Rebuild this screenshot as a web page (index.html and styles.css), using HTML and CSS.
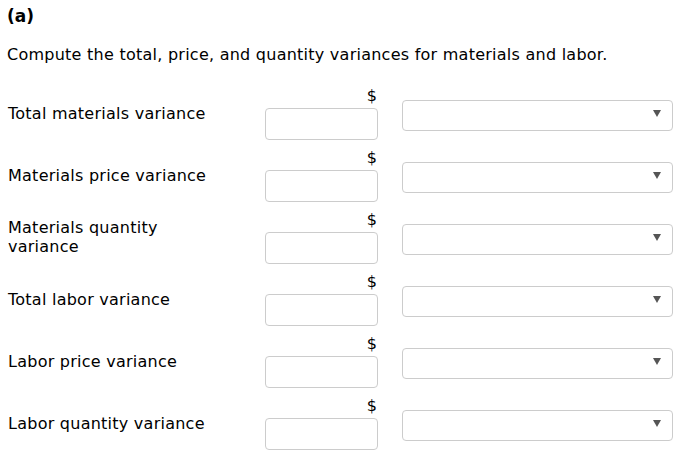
FILE: index.html
```html
<!DOCTYPE html>
<html>
<head>
<meta charset="utf-8">
<link rel="stylesheet" href="styles.css">
</head>
<body>
<div class="page">
  <h3 class="part">(a)</h3>
  <p class="prompt">Compute the total, price, and quantity variances for materials and labor.</p>
  <div class="rows">
    <div class="row">
      <div class="label">Total materials variance</div>
      <div class="amount"><span class="cur">$</span><input class="field" type="text"></div>
      <div class="choice"><div class="select"><span class="arrow"></span></div></div>
    </div>
    <div class="row">
      <div class="label">Materials price variance</div>
      <div class="amount"><span class="cur">$</span><input class="field" type="text"></div>
      <div class="choice"><div class="select"><span class="arrow"></span></div></div>
    </div>
    <div class="row">
      <div class="label">Materials quantity variance</div>
      <div class="amount"><span class="cur">$</span><input class="field" type="text"></div>
      <div class="choice"><div class="select"><span class="arrow"></span></div></div>
    </div>
    <div class="row">
      <div class="label">Total labor variance</div>
      <div class="amount"><span class="cur">$</span><input class="field" type="text"></div>
      <div class="choice"><div class="select"><span class="arrow"></span></div></div>
    </div>
    <div class="row">
      <div class="label">Labor price variance</div>
      <div class="amount"><span class="cur">$</span><input class="field" type="text"></div>
      <div class="choice"><div class="select"><span class="arrow"></span></div></div>
    </div>
    <div class="row">
      <div class="label">Labor quantity variance</div>
      <div class="amount"><span class="cur">$</span><input class="field" type="text"></div>
      <div class="choice"><div class="select"><span class="arrow"></span></div></div>
    </div>
  </div>
</div>
</body>
</html>
```
FILE: styles.css
```css
html, body {
  margin: 0;
  padding: 0;
  background: #fff;
}
body {
  font-family: "DejaVu Sans", Verdana, sans-serif;
  font-size: 16px;
  color: #000;
}
.page {
  padding: 6px 0 0 7px;
}
.part {
  margin: 0;
  font-size: 17px;
  font-weight: bold;
  line-height: 20px;
}
.prompt {
  margin: 19px 0 0 0;
  line-height: 20px;
  letter-spacing: 0.25px;
}
.rows {
  margin-top: 21px;
  display: flex;
  flex-direction: column;
  gap: 8px;
}
.row {
  display: grid;
  grid-template-columns: 258px 113px 1fr;
  align-items: center;
  height: 54px;
}
.label {
  max-width: 215px;
  line-height: 19px;
  letter-spacing: 0.25px;
  padding-left: 1px;
}
.amount {
  display: flex;
  flex-direction: column;
  align-items: flex-end;
}
.cur {
  line-height: 20px;
  margin-bottom: 2px;
  padding-right: 1px;
}
.field {
  box-sizing: border-box;
  width: 113px;
  height: 32px;
  margin: 0;
  border: 1px solid #ccc;
  border-radius: 4px;
  background: #fff;
}
.choice {
  padding-left: 24px;
}
.select {
  position: relative;
  box-sizing: border-box;
  width: 271px;
  height: 31px;
  border: 1px solid #ccc;
  border-radius: 4px;
  background: #fff;
  margin-top: 5px;
}
.arrow {
  position: absolute;
  right: 11px;
  top: 9px;
  width: 0;
  height: 0;
  border-left: 4px solid transparent;
  border-right: 4px solid transparent;
  border-top: 7px solid #555;
}
```
